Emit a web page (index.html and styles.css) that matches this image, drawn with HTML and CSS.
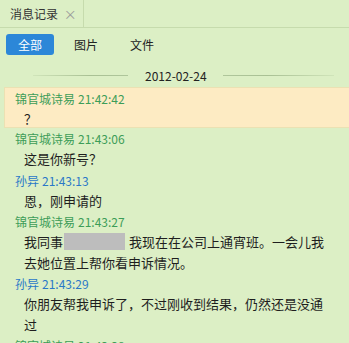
FILE: index.html
```html
<!DOCTYPE html>
<html lang="zh-CN">
<head>
    <meta charset="UTF-8">
    <meta name="viewport" content="width=device-width, initial-scale=1.0">
    <title>消息记录</title>
    <link rel="stylesheet" href="styles.css">
</head>
<body>
    <div class="tabbar">
        <div class="tab">消息记录 <span class="tab-close">×</span></div>
    </div>
    <div class="filters">
        <button class="filter active">全部</button>
        <button class="filter">图片</button>
        <button class="filter">文件</button>
    </div>
    <div class="date-row">
        <span class="date-line left"></span>
        <span class="date-text">2012-02-24</span>
        <span class="date-line right"></span>
    </div>
    <div class="messages">
        <div class="msg highlight">
            <div class="msg-head friend">锦官城诗易<span class="msg-time">21:42:42</span></div>
            <div class="msg-body">？</div>
        </div>
        <div class="msg">
            <div class="msg-head friend">锦官城诗易<span class="msg-time">21:43:06</span></div>
            <div class="msg-body">这是你新号？</div>
        </div>
        <div class="msg">
            <div class="msg-head self">孙异<span class="msg-time">21:43:13</span></div>
            <div class="msg-body">恩，刚申请的</div>
        </div>
        <div class="msg">
            <div class="msg-head friend">锦官城诗易<span class="msg-time">21:43:27</span></div>
            <div class="msg-body">我同事<span class="redacted"></span>我现在在公司上通宵班。一会儿我去她位置上帮你看申诉情况。</div>
        </div>
        <div class="msg">
            <div class="msg-head self">孙异<span class="msg-time">21:43:29</span></div>
            <div class="msg-body">你朋友帮我申诉了，不过刚收到结果，仍然还是没通过</div>
        </div>
        <div class="msg">
            <div class="msg-head friend">锦官城诗易<span class="msg-time">21:43:38</span></div>
            <div class="msg-body">嗯</div>
        </div>
    </div>
</body>
</html>
```

FILE: styles.css
```css
body {
    margin: 0;
    width: 349px;
    height: 343px;
    overflow: hidden;
    background-color: #dcefc5;
    font-family: "Microsoft YaHei", "Noto Sans CJK SC", sans-serif;
    color: #1e1e1e;
}
.tabbar {
    height: 27px;
    border-bottom: 1px solid #c6dbad;
    display: flex;
}
.tab {
    width: 73px;
    padding-left: 10px;
    border-right: 1px solid #c6dbad;
    font-size: 12px;
    line-height: 27px;
    color: #333;
}
.tab-close {
    color: #9a9a9a;
    font-size: 13px;
    margin-left: 3px;
}
.filters {
    display: flex;
    align-items: center;
    margin-top: 6px;
    padding-left: 6px;
}
.filter {
    height: 21px;
    width: 48px;
    padding: 0;
    margin-right: 8px;
    border: none;
    border-radius: 3px;
    background: transparent;
    font-family: inherit;
    font-size: 12px;
    color: #222;
}
.filter.active {
    background-color: #2c87d8;
    color: #fff;
}
.date-row {
    display: flex;
    align-items: center;
    height: 24px;
    margin-top: 8px;
    padding-left: 33px;
}
.date-line {
    height: 1px;
}
.date-line.left {
    width: 95px;
    background: linear-gradient(to right, rgba(160, 185, 140, 0.2), #a9c094 60%, #afc69b);
}
.date-line.right {
    width: 111px;
    background: linear-gradient(to right, #afc69b, #a9c094 40%, rgba(160, 185, 140, 0.2));
}
.date-text {
    margin: 0 16px 0 17px;
    font-size: 12px;
    color: #222;
}
.msg {
    padding-left: 15px;
    padding-right: 17px;
}
.msg.highlight {
    margin-left: 4px;
    padding-left: 10px;
    background-color: #fdebc3;
    border: 1px solid #ebe1b3;
    border-right: none;
    height: 39px;
}
.msg-head {
    font-size: 12px;
    line-height: 21px;
}
.msg-head.friend {
    color: #3c9d58;
}
.msg-head.self {
    color: #2a78c8;
}
.msg-time {
    margin-left: 3px;
}
.msg-body {
    padding-left: 9px;
    font-size: 13px;
    line-height: 20.5px;
}
.redacted {
    display: inline-block;
    width: 61px;
    height: 17px;
    margin: 0 4px 0 1px;
    vertical-align: -3px;
    background-color: #bdbdbd;
}
```
